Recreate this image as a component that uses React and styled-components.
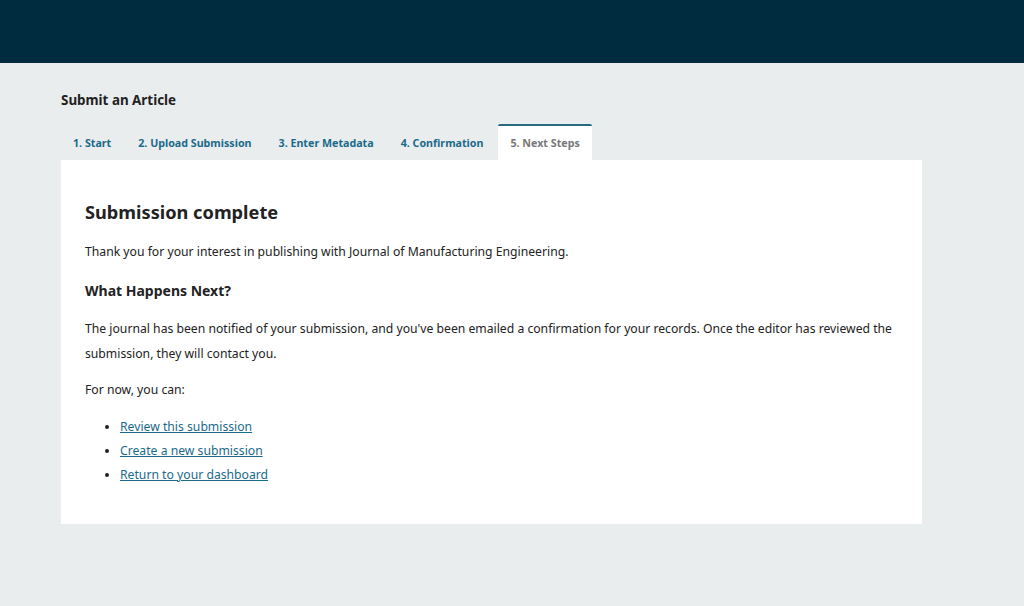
import React from "react";
import styled, { createGlobalStyle } from "styled-components";

const Global = createGlobalStyle`
  html, body { margin: 0; padding: 0; }
  body {
    background: #eaedee;
    font-family: "Noto Sans", "Open Sans", sans-serif;
    color: #222;
  }
`;

const Header = styled.header`
  height: 63px;
  background: #002c40;
`;

const Main = styled.main`
  padding: 28px 102px 0 61px;
  min-height: 543px;
  box-sizing: border-box;
`;

const PageTitle = styled.h1`
  margin: 0;
  font-size: 13.4px;
  font-weight: 700;
  line-height: 18px;
  color: #222;
`;

const Tabs = styled.ul`
  list-style: none;
  margin: 15px 0 0;
  padding: 0;
  display: flex;
`;

const Tab = styled.li`
  box-sizing: border-box;
  height: 36px;
  padding: 0 12px;
  margin-right: 3px;
  display: flex;
  align-items: center;
  font-size: 10.7px;
  font-weight: 700;
  color: ${(p) => (p.$active ? "#777" : "#1a6a8a")};
  background: ${(p) => (p.$active ? "#fff" : "transparent")};
  border-top: 2px solid ${(p) => (p.$active ? "#2a6a80" : "transparent")};
  border-top-left-radius: 2px;
  border-top-right-radius: 2px;
`;

const Card = styled.section`
  background: #fff;
  padding: 24px 24px 37px;
  width: 861px;
  box-sizing: border-box;
`;

const Heading = styled.h2`
  margin: 16px 0 0;
  font-size: 18.2px;
  font-weight: 700;
  line-height: 24px;
`;

const SubHeading = styled.h3`
  margin: 17px 0 0;
  font-size: 14px;
  font-weight: 700;
  line-height: 20px;
`;

const Para = styled.p`
  margin: ${(p) => p.$mt || "14px"} 0 0;
  font-size: 12.2px;
  line-height: 25px;
`;

const List = styled.ul`
  margin: 13px 0 0;
  padding-left: 35px;
  font-size: 12.2px;
  line-height: 24px;
`;

const Item = styled.li`
  height: 24px;
`;

const Link = styled.a`
  color: #1a6a8a;
  text-decoration: underline;
`;

export default function App() {
  return (
    <>
      <Global />
      <Header />
      <Main>
        <PageTitle>Submit an Article</PageTitle>
        <Tabs>
          <Tab>1. Start</Tab>
          <Tab>2. Upload Submission</Tab>
          <Tab>3. Enter Metadata</Tab>
          <Tab>4. Confirmation</Tab>
          <Tab $active>5. Next Steps</Tab>
        </Tabs>
        <Card>
          <Heading>Submission complete</Heading>
          <Para $mt="15px">
            Thank you for your interest in publishing with Journal of Manufacturing Engineering.
          </Para>
          <SubHeading>What Happens Next?</SubHeading>
          <Para $mt="15px">
            The journal has been notified of your submission, and you've been emailed a confirmation for your records. Once the editor has reviewed the submission, they will contact you.
          </Para>
          <Para $mt="11px">For now, you can:</Para>
          <List>
            <Item><Link href="#">Review this submission</Link></Item>
            <Item><Link href="#">Create a new submission</Link></Item>
            <Item><Link href="#">Return to your dashboard</Link></Item>
          </List>
        </Card>
      </Main>
    </>
  );
}
